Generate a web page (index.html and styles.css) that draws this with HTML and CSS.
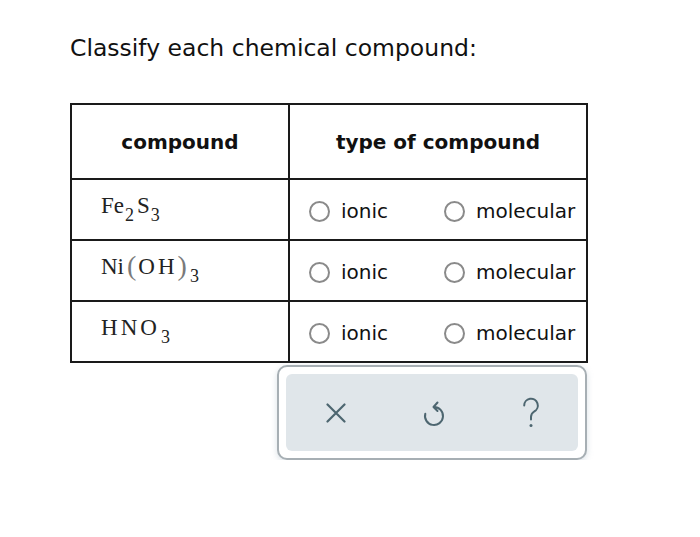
FILE: index.html
```html
<!DOCTYPE html>
<html>
<head>
<meta charset="utf-8">
<link rel="stylesheet" href="styles.css">
</head>
<body>
<div class="page">
  <h1 class="title">Classify each chemical compound:</h1>
  <table class="grid">
    <thead>
      <tr>
        <th class="col-a">compound</th>
        <th class="col-b">type of compound</th>
      </tr>
    </thead>
    <tbody>
      <tr>
        <td class="formula">Fe<sub>2</sub><span class="sp">S</span><sub>3</sub></td>
        <td><div class="choices"><label class="opt"><span class="radio"></span>ionic</label><label class="opt"><span class="radio"></span>molecular</label></div></td>
      </tr>
      <tr>
        <td class="formula">Ni<span class="paren">(</span>O<span class="sp">H</span><span class="paren">)</span><sub>3</sub></td>
        <td><div class="choices"><label class="opt"><span class="radio"></span>ionic</label><label class="opt"><span class="radio"></span>molecular</label></div></td>
      </tr>
      <tr>
        <td class="formula">H<span class="sp">N</span><span class="sp">O</span><sub class="far">3</sub></td>
        <td><div class="choices"><label class="opt"><span class="radio"></span>ionic</label><label class="opt"><span class="radio"></span>molecular</label></div></td>
      </tr>
    </tbody>
  </table>
  <div class="toolbar-wrap">
    <div class="tool-outer">
      <div class="tool-inner">
        <svg class="icon" width="20" height="20" viewBox="0 0 20 20"><path d="M1.5 1.5 L18.5 18.5 M18.5 1.5 L1.5 18.5" stroke="#4d6670" stroke-width="2.2" fill="none" stroke-linecap="round"/></svg>
        <svg class="icon" width="22" height="30" viewBox="0 0 22 30"><path d="M2.3 15.7 A9 9 0 1 0 11 9 M14.5 4.5 L10.5 9 L14.5 13" stroke="#4d6670" stroke-width="2" fill="none" stroke-linecap="round" stroke-linejoin="round"/></svg>
        <svg class="icon" width="18" height="34" viewBox="0 0 18 34"><path d="M2.2 9.5 A6.8 6.8 0 1 1 12.2 15.5 Q9 17.4 9 21 L9 23.5" stroke="#4d6670" stroke-width="2" fill="none" stroke-linecap="round"/><circle cx="9" cy="29.5" r="1.5" fill="#4d6670"/></svg>
      </div>
    </div>
  </div>
</div>
</body>
</html>
```
FILE: styles.css
```css
html, body {
  margin: 0;
  padding: 0;
  background: #ffffff;
}
.page {
  padding: 34px 0 0 70px;
}
.title {
  margin: 0 0 41px 0;
  font-family: "DejaVu Sans", Verdana, sans-serif;
  font-weight: normal;
  font-size: 23.5px;
  line-height: 28px;
  color: #111;
}
.grid {
  border-collapse: collapse;
  border: 2px solid #1a1a1a;
}
.grid th, .grid td {
  border: 2px solid #1a1a1a;
  padding: 0;
}
.grid th {
  height: 73px;
  font-family: "DejaVu Sans", Verdana, sans-serif;
  font-weight: bold;
  font-size: 20px;
  color: #111;
}
.col-a { width: 216px; }
.col-b { width: 296px; }
.grid td {
  height: 59px;
}
.formula {
  font-family: "Liberation Serif", "Times New Roman", serif;
  font-size: 23px;
  color: #222;
  padding-left: 29px !important;
  vertical-align: top;
  padding-top: 13px !important;
  height: 46px !important;
}
.formula sub {
  font-size: 18px;
  vertical-align: -8px;
  line-height: 0;
  margin-left: 1px;
}
.formula sub.far { margin-left: 4px; }
.sp { margin-left: 3px; }
.paren {
  font-size: 28px;
  color: #7a7a7a;
  margin: 0 2px 0 3px;
  vertical-align: -1px;
  line-height: 0;
}
.choices {
  display: flex;
  align-items: center;
  padding: 3px 0 0 19px;
  font-family: "DejaVu Sans", Verdana, sans-serif;
  font-size: 20px;
  color: #111;
}
.opt {
  display: flex;
  align-items: center;
  gap: 11px;
}
.opt:first-child { width: 135px; }
.radio {
  border: 2px solid #8a8a8a;
  border-radius: 50%;
  box-sizing: border-box;
  display: inline-block;
  width: 21px;
  height: 21px;
}
.toolbar-wrap {
  display: flex;
  padding: 2px 0 0 207px;
}
.tool-outer {
  width: 310px;
  height: 95px;
  box-sizing: border-box;
  border: 2px solid #a7afb4;
  border-radius: 10px;
  background: #fff;
  padding: 7px;
  box-shadow: 0 2px 6px rgba(150,170,185,0.35);
}
.tool-inner {
  height: 100%;
  background: #e0e6ea;
  border-radius: 6px;
  display: flex;
  align-items: center;
  justify-content: space-between;
  padding: 0 38px 0 40px;
  box-sizing: border-box;
}
.icon { display: block; }
```
